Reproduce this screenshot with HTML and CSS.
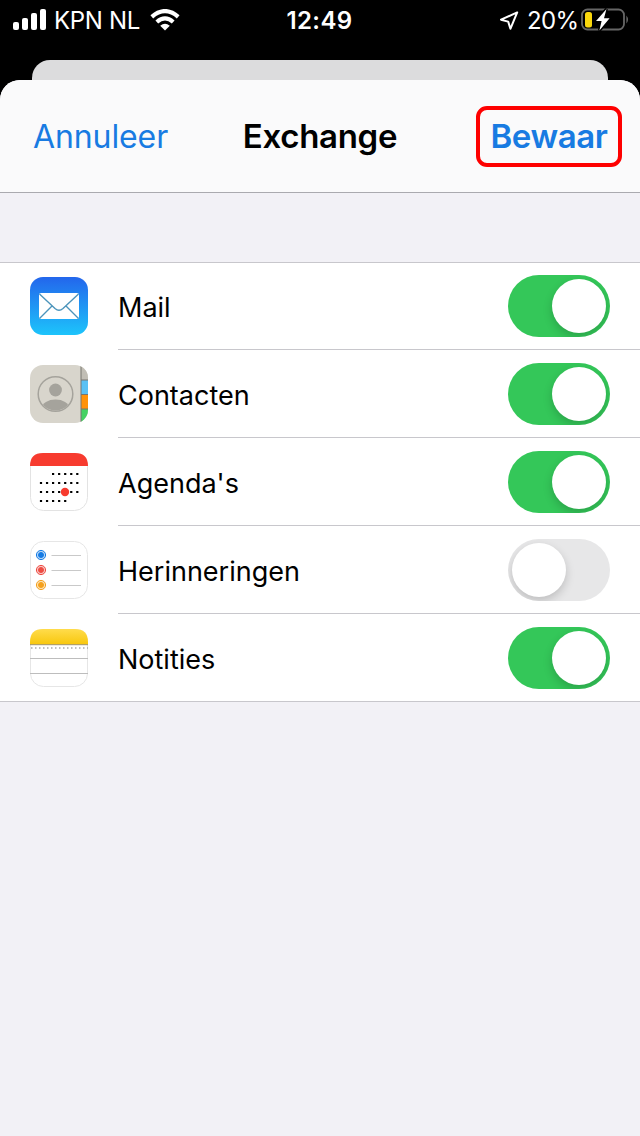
FILE: index.html
```html
<!DOCTYPE html>
<html lang="nl">
<head>
<meta charset="utf-8">
<title>Exchange</title>
<link rel="stylesheet" href="styles.css">
</head>
<body>
<div class="status">
  <div class="status-left">
    <svg class="signal" width="34" height="22" viewBox="0 0 34 22" fill="#fff"><rect x="0" y="13" width="6" height="8" rx="2"/><rect x="9" y="9" width="6" height="12" rx="2"/><rect x="18" y="4" width="6" height="17" rx="2"/><rect x="27" y="0" width="6" height="21" rx="2"/></svg>
    <span class="carrier">KPN NL</span>
    <svg class="wifi" width="30" height="22" viewBox="0 0 30 22"><g fill="none" stroke="#fff" stroke-width="4.2"><path d="M1.8 7.8 Q15 -3.6 28.2 7.8"/><path d="M6.8 13 Q15 5.8 23.2 13"/></g><path fill="#fff" d="M10.2 16.7 Q15 13 19.8 16.7 L15 21.6Z"/></svg>
  </div>
  <span class="clock">12:49</span>
  <div class="status-right">
    <svg class="arrow" width="20" height="20" viewBox="0 0 20 20"><path d="M18.2 1.4 L2 8.7 L9.2 10.6 L11.4 17.8Z" fill="none" stroke="#fff" stroke-width="2" stroke-linejoin="round"/></svg>
    <span class="percent">20%</span>
    <svg class="battery" width="49" height="24" viewBox="0 0 49 24"><rect x="1" y="1.5" width="42" height="20" rx="5.5" fill="none" stroke="#666" stroke-width="1.8"/><path d="M45.4 7.5 Q48.600 11.5 45.4 15.5Z" fill="#666"/><rect x="4" y="4" width="7" height="15.5" rx="2.5" fill="#fad70c"/><path d="M25.5 1 L15 13 H20.6 L18.4 22.6 L28.6 10.2 H23Z" fill="#fff" stroke="#000" stroke-width="3" paint-order="stroke"/></svg>
  </div>
</div>
<div class="back-sheet"></div>
<main class="sheet">
  <header class="nav">
    <span class="cancel">Annuleer</span>
    <h1 class="title">Exchange</h1>
    <span class="save">Bewaar</span>
  </header>
  <div class="list">
    <div class="row">
      <svg class="icon" viewBox="0 0 58 58"><defs><linearGradient id="mail" x2="0" y2="1"><stop stop-color="#2366ec"/><stop offset="1" stop-color="#1dc4fb"/></linearGradient></defs><rect width="58" height="58" rx="13" fill="url(#mail)"/><rect x="9" y="16" width="40" height="26" rx="2" fill="#fff"/><path d="M9.5 17 L25 31.5 Q29 35 33 31.5 L48.500 17 M9.500 41.500 L22 29 M48.500 41.500 L36 29" fill="none" stroke="#4b94bb" stroke-width="1.400"/></svg>
      <div class="cell"><span class="label">Mail</span><span class="toggle on"></span></div>
    </div>
    <div class="row">
      <svg class="icon" viewBox="0 0 58 58"><defs><clipPath id="tile"><rect width="58" height="58" rx="13"/></clipPath><clipPath id="face"><circle cx="25.500" cy="29" r="16.500"/></clipPath></defs><g clip-path="url(#tile)"><rect width="58" height="58" fill="#d8d5cc"/><rect x="51" width="7" height="15" fill="#c1beb5"/><rect x="51" y="15" width="7" height="14" fill="#5ac1f4"/><rect x="51" y="29" width="7" height="15" fill="#ff9209"/><rect x="51" y="44" width="7" height="14" fill="#45d263"/><path d="M51 0V58M51 15H58M51 29.500H58M51 44H58" stroke="#77756e" stroke-width="1"/></g><g clip-path="url(#face)" fill="#a5a39c"><circle cx="25.500" cy="25" r="6.400"/><ellipse cx="25.500" cy="43" rx="13.500" ry="8.500"/></g><circle cx="25.500" cy="29" r="17.300" fill="none" stroke="#a5a39c" stroke-width="1.500"/></svg>
      <div class="cell"><span class="label">Contacten</span><span class="toggle on"></span></div>
    </div>
    <div class="row">
      <svg class="icon" viewBox="0 0 58 58"><rect x=".5" y=".5" width="57" height="57" rx="13" fill="#fff" stroke="#e3e3e3"/><path d="M0 13 Q0 0 13 0 H45 Q58 0 58 13Z" fill="#f73b2f"/><g stroke="#000" stroke-width="2.200" stroke-dasharray="2.200 3.850"><path d="M22 21H49"/><path d="M9.900 30H49"/><path d="M9.900 39H49"/><path d="M9.900 48H37"/></g><circle cx="35" cy="39" r="4.200" fill="#f73b2f"/></svg>
      <div class="cell"><span class="label">Agenda's</span><span class="toggle on"></span></div>
    </div>
    <div class="row">
      <svg class="icon" viewBox="0 0 58 58"><rect x=".5" y=".5" width="57" height="57" rx="13" fill="#fff" stroke="#e6e6e6"/><path d="M21.500 14.500H51M21.500 29.500H51M21.500 44.500H51" stroke="#c9c9c9"/><g fill="#157be5" stroke="#157be5"><circle cx="11" cy="14" r="4.600" fill="#b5d5f5"/><circle cx="11" cy="14" r="2.500"/></g><g fill="#ee4c43" stroke="#ee4c43"><circle cx="11" cy="29" r="4.600" fill="#f9c4c1"/><circle cx="11" cy="29" r="2.500"/></g><g fill="#f5a01c" stroke="#f5a01c"><circle cx="11" cy="44" r="4.600" fill="#fbdfaf"/><circle cx="11" cy="44" r="2.500"/></g></svg>
      <div class="cell"><span class="label">Herinneringen</span><span class="toggle"></span></div>
    </div>
    <div class="row">
      <svg class="icon" viewBox="0 0 58 58"><defs><linearGradient id="note" x2="0" y2="1"><stop stop-color="#ffdc4c"/><stop offset="1" stop-color="#f8c70d"/></linearGradient></defs><rect x=".5" y=".5" width="57" height="57" rx="13" fill="#fff" stroke="#e6e6e6"/><path d="M0 15.500 V13 Q0 0 13 0 H45 Q58 0 58 13 V15.500Z" fill="url(#note)"/><path d="M0 15.700H58" stroke="#a19261"/><path d="M1 19H58" stroke="#aaa" stroke-width="1.500" stroke-dasharray="1.500 2.500"/><path d="M0 29.500H58M0 44.500H58" stroke="#bdbdbd"/></svg>
      <div class="cell"><span class="label">Notities</span><span class="toggle on"></span></div>
    </div>
  </div>
</main>
</body>
</html>
```
FILE: styles.css
```css
* { box-sizing: border-box; }
body {
  margin: 0;
  height: 1136px;
  display: flex;
  flex-direction: column;
  background: #000;
  font-family: Inter, "Liberation Sans", sans-serif;
  color: #000;
  overflow: hidden;
}
svg { display: block; flex: none; }
.status {
  height: 60px;
  display: grid;
  grid-template-columns: 1fr auto 1fr;
  align-items: start;
  padding: 0 10px 0 13px;
  color: #fff;
  font-size: 24px;
  line-height: 41px;
  white-space: nowrap;
}
.status-left, .status-right { display: flex; }
.status-right { justify-content: flex-end; }
.signal { margin-top: 9px; }
.carrier { width: 86px; margin-left: 7px; letter-spacing: -0.3px; }
.wifi { margin: 9px 0 0 10px; }
.clock { margin-right: 4px; font-weight: 600; letter-spacing: 0.4px; }
.arrow { margin: 11px 8px 0 0; }
.percent { width: 50px; letter-spacing: -0.7px; }
.battery { margin: 8px 0 0 4px; }
.back-sheet {
  flex: none;
  height: 20px;
  margin: 0 32px;
  border-radius: 18px 18px 0 0;
  background: #dcdcdd;
}
.sheet {
  flex: 1;
  border-radius: 20px 20px 0 0;
  background: #f2f1f6;
  overflow: hidden;
}
.nav {
  height: 113px;
  display: grid;
  grid-template-columns: 1fr auto 1fr;
  align-items: center;
  padding: 0 18px;
  background: #fafafb;
  border-bottom: 1px solid #aaaaaf;
  font-size: 32px;
}
.cancel { padding-left: 15px; color: #187be2; letter-spacing: -0.1px; }
.title { margin: 0; font-size: 33px; font-weight: 600; letter-spacing: -0.3px; }
.save {
  justify-self: end;
  width: 146px;
  height: 61px;
  border: 4px solid #fe0000;
  border-radius: 11px;
  color: #187be2;
  font-size: 33px;
  font-weight: 600;
  line-height: 53px;
  text-align: center;
  letter-spacing: -0.4px;
}
.list {
  margin-top: 69px;
  border-top: 1px solid #c8c7cc;
  border-bottom: 1px solid #c8c7cc;
  background: #fff;
}
.row {
  height: 88px;
  display: flex;
  padding-left: 30px;
  gap: 30px;
}
.row:first-child { height: 87px; }
.row:first-child .icon { margin-top: 14px; }
.icon { width: 58px; height: 58px; margin-top: 15px; }
.cell {
  flex: 1;
  display: flex;
  align-items: center;
  justify-content: space-between;
  padding-right: 30px;
  border-bottom: 1px solid #c8c7cc;
}
.row:last-child { height: 87px; }
.row:last-child .cell { border-bottom: 0; }
.label { font-size: 27px; line-height: 32px; padding-top: 4px; }
.row:first-child .label { padding-top: 3px; }
.toggle {
  width: 102px;
  height: 62px;
  padding: 4px;
  border-radius: 31px;
  background: #e7e7e8;
  overflow: hidden;
}
.toggle::before {
  content: "";
  display: block;
  width: 54px;
  height: 54px;
  border-radius: 50%;
  background: #fff;
  box-shadow: 0 4px 10px rgba(0, 0, 0, 0.18);
}
.toggle.on { background: #34c759; }
.toggle.on::before { margin-left: auto; }
```
